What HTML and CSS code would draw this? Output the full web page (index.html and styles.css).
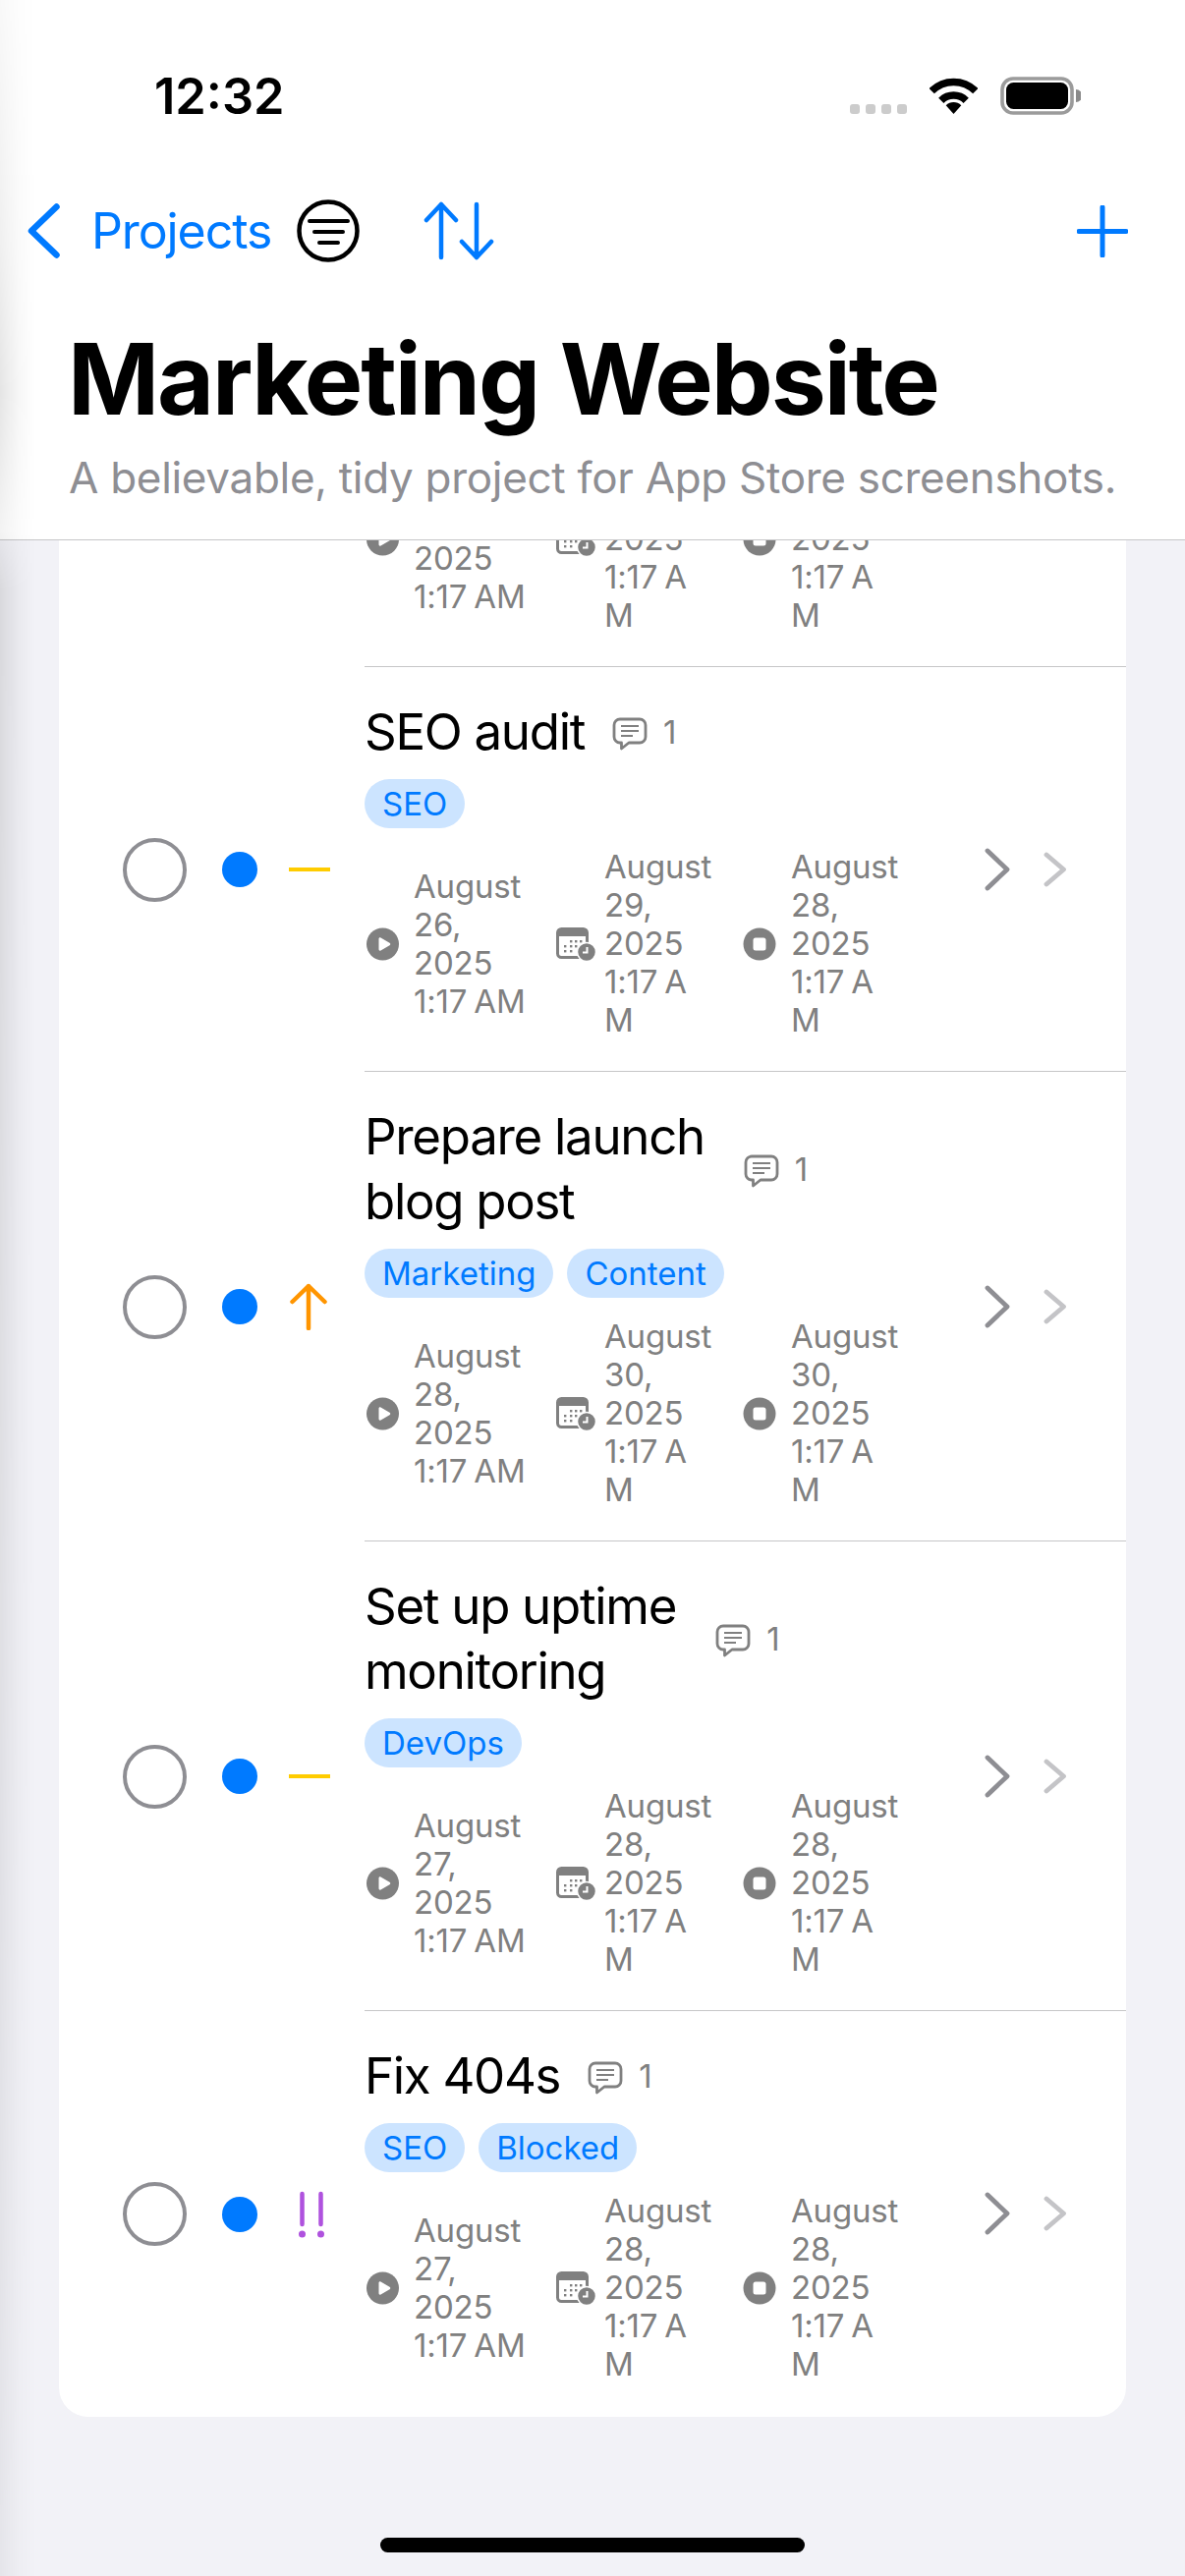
FILE: index.html
```html
<!DOCTYPE html>
<html lang="en">
<head>
<meta charset="utf-8">
<title>Marketing Website</title>
<link rel="stylesheet" href="styles.css">
</head>
<body>
<svg class="sprite" xmlns="http://www.w3.org/2000/svg">
  <symbol id="i-play" viewBox="0 0 36 36"><circle cx="18.500" cy="18" r="16.500" fill="#808080"/><path d="M14.500 12.800c0-1.200 1-1.800 2-1.200l9 5.200c1 .6 1 1.900 0 2.500l-9 5.200c-1 .6-2-.1-2-1.200z" fill="#fff"/></symbol>
  <symbol id="i-stop" viewBox="0 0 36 36"><circle cx="17" cy="18" r="16.500" fill="#808080"/><rect x="10.500" y="11.500" width="13" height="13" rx="2.500" fill="#fff"/></symbol>
  <symbol id="i-cal" viewBox="0 0 40 34">
    <rect x="1.500" y="1.500" width="30" height="29" rx="4" fill="none" stroke="#808080" stroke-width="3"/>
    <path d="M1 9V5a4 4 0 0 1 4-4h23a4 4 0 0 1 4 4v4z" fill="#808080"/>
    <g fill="#808080"><rect x="14" y="13" width="2.400" height="2.400"/><rect x="19" y="13" width="2.400" height="2.400"/><rect x="24" y="13" width="2.400" height="2.400"/><rect x="8" y="18" width="2.400" height="2.400"/><rect x="14" y="18" width="2.400" height="2.400"/><rect x="19" y="18" width="2.400" height="2.400"/><rect x="8" y="23" width="2.400" height="2.400"/><rect x="14" y="23" width="2.400" height="2.400"/></g>
    <circle cx="31" cy="25" r="9.500" fill="#808080" stroke="#fff" stroke-width="1.500"/>
    <path d="M31.500 20v5.500H27" fill="none" stroke="#fff" stroke-width="2"/>
  </symbol>
  <symbol id="i-comment" viewBox="0 0 36 34">
    <path d="M8 2h20a6 6 0 0 1 6 6v12a6 6 0 0 1-6 6H17l-7.500 6v-6H8a6 6 0 0 1-6-6V8a6 6 0 0 1 6-6z" fill="none" stroke="#808080" stroke-width="2.800" stroke-linejoin="round"/>
    <path d="M9 9h18M9 14h18M9 19h12" stroke="#808080" stroke-width="2.200" fill="none"/>
  </symbol>
  <symbol id="i-chev" viewBox="0 0 26 44"><path d="M3 3l20 19L3 41" fill="none" stroke="#8e8e93" stroke-width="4.800" stroke-linecap="round" stroke-linejoin="round"/></symbol>
  <symbol id="i-chev-s" viewBox="0 0 24 36"><path d="M3 3l17.500 15L3 33" fill="none" stroke="#c4c4c7" stroke-width="4.800" stroke-linecap="round" stroke-linejoin="round"/></symbol>
  <symbol id="i-up" viewBox="0 0 40 48"><path d="M20 46V3M3.500 19L20 3l16.500 16" fill="none" stroke="#ff9500" stroke-width="4.500" stroke-linecap="round" stroke-linejoin="round"/></symbol>
  <symbol id="i-dash" viewBox="0 0 42 6"><path d="M0 3h42" stroke="#ffcc00" stroke-width="4"/></symbol>
  <symbol id="i-bang" viewBox="0 0 28 48"><path d="M4.500 3v31M23.500 3v31" stroke="#af52de" stroke-width="4.500" stroke-linecap="round"/><circle cx="4.500" cy="44" r="3.500" fill="#af52de"/><circle cx="23.500" cy="44" r="3.500" fill="#af52de"/></symbol>
</svg>

<div class="edge-shadow"></div>

<header class="header">
  <div class="statusbar">
    <span class="clock">12:32</span>
    <div class="status-icons">
      <div class="signal"><i></i><i></i><i></i><i></i></div>
      <svg class="wifi" width="49" height="37" viewBox="0 0 49 37"><path d="M2.200 13.700A31.500 31.500 0 0 1 46.800 13.700M11.800 23.300A18 18 0 0 1 37.200 23.300" fill="none" stroke="#000" stroke-width="7.500"/><path d="M24.500 37L16.700 28.200A11 11 0 0 1 32.300 28.200Z"/></svg>
      <svg class="battery" width="82" height="39" viewBox="0 0 82 39"><rect x="2" y="2" width="71" height="35" rx="11" fill="none" stroke="#9b9b9b" stroke-width="3.600"/><rect x="6" y="6" width="63" height="27" rx="7.500"/><path d="M77 13a6 6 0 0 1 0 13z" fill="#8a8a8a"/></svg>
    </div>
  </div>
  <nav class="navbar">
    <svg class="nav-back" width="33" height="56" viewBox="0 0 33 56"><path d="M29.500 3.500L4 28l25.500 24.500" fill="none" stroke="#007aff" stroke-width="6.500" stroke-linecap="round" stroke-linejoin="round"/></svg>
    <span class="nav-label">Projects</span>
    <svg class="nav-filter" width="64" height="64" viewBox="0 0 64 64"><circle cx="32" cy="32" r="29.500" fill="none" stroke="#000" stroke-width="4.500"/><path d="M13 22h39M18 33h29M23 44h19" stroke="#000" stroke-width="4" stroke-linecap="round"/></svg>
    <svg class="nav-sort" width="72" height="60" viewBox="0 0 72 60"><path d="M18 57V3M3 19L18 3l15 16M54 3v54M39 41l15 16 15-16" fill="none" stroke="#007aff" stroke-width="4.500" stroke-linecap="round" stroke-linejoin="round"/></svg>
    <svg class="nav-plus" width="52" height="53" viewBox="0 0 52 53"><path d="M26 2v49M2 26.500h48" fill="none" stroke="#007aff" stroke-width="5" stroke-linecap="round"/></svg>
  </nav>
  <h1 class="title">Marketing Website</h1>
  <p class="subtitle">A believable, tidy project for App Store screenshots.</p>
</header>

<main class="content">
  <section class="card">

    <article class="row row-clipped">
      <div class="status"></div>
      <div class="body">
        <div class="main">
          <div class="dates">
            <div class="date date-start"><svg class="date-icon"><use href="#i-play"/></svg><span class="date-text"><span class="date-day">August 25, 2025</span><span class="date-time">1:17 AM</span></span></div>
            <div class="date date-due"><svg class="date-icon"><use href="#i-cal"/></svg><span class="date-text"><span class="date-day">August 28, 2025</span><span class="date-time">1:17 AM</span></span></div>
            <div class="date date-end"><svg class="date-icon"><use href="#i-stop"/></svg><span class="date-text"><span class="date-day">August 27, 2025</span><span class="date-time">1:17 AM</span></span></div>
          </div>
        </div>
      </div>
    </article>

    <article class="row">
      <div class="status">
        <span class="check"></span><span class="dot"></span>
        <svg class="prio prio-dash"><use href="#i-dash"/></svg>
      </div>
      <div class="body">
        <div class="main">
          <div class="head">
            <div class="task">SEO audit</div>
            <div class="comments"><svg class="comment-icon"><use href="#i-comment"/></svg><span>1</span></div>
          </div>
          <div class="tags"><span class="tag">SEO</span></div>
          <div class="dates">
            <div class="date date-start"><svg class="date-icon"><use href="#i-play"/></svg><span class="date-text"><span class="date-day">August 26, 2025</span><span class="date-time">1:17 AM</span></span></div>
            <div class="date date-due"><svg class="date-icon"><use href="#i-cal"/></svg><span class="date-text"><span class="date-day">August 29, 2025</span><span class="date-time">1:17 AM</span></span></div>
            <div class="date date-end"><svg class="date-icon"><use href="#i-stop"/></svg><span class="date-text"><span class="date-day">August 28, 2025</span><span class="date-time">1:17 AM</span></span></div>
          </div>
        </div>
        <div class="chevrons"><svg class="chev chev-dark"><use href="#i-chev"/></svg><svg class="chev chev-light"><use href="#i-chev-s"/></svg></div>
      </div>
    </article>

    <article class="row">
      <div class="status">
        <span class="check"></span><span class="dot"></span>
        <svg class="prio prio-up"><use href="#i-up"/></svg>
      </div>
      <div class="body">
        <div class="main">
          <div class="head head-wrapped">
            <div class="task">Prepare launch<br>blog post</div>
            <div class="comments"><svg class="comment-icon"><use href="#i-comment"/></svg><span>1</span></div>
          </div>
          <div class="tags"><span class="tag">Marketing</span><span class="tag">Content</span></div>
          <div class="dates">
            <div class="date date-start"><svg class="date-icon"><use href="#i-play"/></svg><span class="date-text"><span class="date-day">August 28, 2025</span><span class="date-time">1:17 AM</span></span></div>
            <div class="date date-due"><svg class="date-icon"><use href="#i-cal"/></svg><span class="date-text"><span class="date-day">August 30, 2025</span><span class="date-time">1:17 AM</span></span></div>
            <div class="date date-end"><svg class="date-icon"><use href="#i-stop"/></svg><span class="date-text"><span class="date-day">August 30, 2025</span><span class="date-time">1:17 AM</span></span></div>
          </div>
        </div>
        <div class="chevrons"><svg class="chev chev-dark"><use href="#i-chev"/></svg><svg class="chev chev-light"><use href="#i-chev-s"/></svg></div>
      </div>
    </article>

    <article class="row">
      <div class="status">
        <span class="check"></span><span class="dot"></span>
        <svg class="prio prio-dash"><use href="#i-dash"/></svg>
      </div>
      <div class="body">
        <div class="main">
          <div class="head head-wrapped">
            <div class="task">Set up uptime<br>monitoring</div>
            <div class="comments"><svg class="comment-icon"><use href="#i-comment"/></svg><span>1</span></div>
          </div>
          <div class="tags"><span class="tag">DevOps</span></div>
          <div class="dates">
            <div class="date date-start"><svg class="date-icon"><use href="#i-play"/></svg><span class="date-text"><span class="date-day">August 27, 2025</span><span class="date-time">1:17 AM</span></span></div>
            <div class="date date-due"><svg class="date-icon"><use href="#i-cal"/></svg><span class="date-text"><span class="date-day">August 28, 2025</span><span class="date-time">1:17 AM</span></span></div>
            <div class="date date-end"><svg class="date-icon"><use href="#i-stop"/></svg><span class="date-text"><span class="date-day">August 28, 2025</span><span class="date-time">1:17 AM</span></span></div>
          </div>
        </div>
        <div class="chevrons"><svg class="chev chev-dark"><use href="#i-chev"/></svg><svg class="chev chev-light"><use href="#i-chev-s"/></svg></div>
      </div>
    </article>

    <article class="row row-last">
      <div class="status">
        <span class="check"></span><span class="dot"></span>
        <svg class="prio prio-bang"><use href="#i-bang"/></svg>
      </div>
      <div class="body">
        <div class="main">
          <div class="head">
            <div class="task">Fix 404s</div>
            <div class="comments"><svg class="comment-icon"><use href="#i-comment"/></svg><span>1</span></div>
          </div>
          <div class="tags"><span class="tag">SEO</span><span class="tag">Blocked</span></div>
          <div class="dates">
            <div class="date date-start"><svg class="date-icon"><use href="#i-play"/></svg><span class="date-text"><span class="date-day">August 27, 2025</span><span class="date-time">1:17 AM</span></span></div>
            <div class="date date-due"><svg class="date-icon"><use href="#i-cal"/></svg><span class="date-text"><span class="date-day">August 28, 2025</span><span class="date-time">1:17 AM</span></span></div>
            <div class="date date-end"><svg class="date-icon"><use href="#i-stop"/></svg><span class="date-text"><span class="date-day">August 28, 2025</span><span class="date-time">1:17 AM</span></span></div>
          </div>
        </div>
        <div class="chevrons"><svg class="chev chev-dark"><use href="#i-chev"/></svg><svg class="chev chev-light"><use href="#i-chev-s"/></svg></div>
      </div>
    </article>

  </section>
</main>

<div class="home-indicator"></div>
</body>
</html>
```

FILE: styles.css
```css
* { box-sizing: border-box; }
html, body { margin: 0; padding: 0; }
body {
  position: relative;
  width: 1206px;
  height: 2622px;
  overflow: hidden;
  display: flex;
  flex-direction: column;
  background: #f2f2f7;
  font-family: Inter, "Liberation Sans", sans-serif;
  color: #000;
}
.sprite { display: none; }

.edge-shadow {
  position: absolute;
  z-index: 5;
  left: 0;
  top: 0;
  bottom: 0;
  width: 36px;
  background: linear-gradient(90deg, rgba(0,0,0,.1), rgba(0,0,0,.03) 55%, rgba(0,0,0,0));
  -webkit-mask-image: linear-gradient(180deg, rgba(0,0,0,.25) 0, rgba(0,0,0,.6) 250px, #000 400px, rgba(0,0,0,.45) 540px, #000 600px, rgba(0,0,0,.5) 2622px);
  mask-image: linear-gradient(180deg, rgba(0,0,0,.25) 0, rgba(0,0,0,.6) 250px, #000 400px, rgba(0,0,0,.45) 540px, #000 600px, rgba(0,0,0,.5) 2622px);
}

.header {
  flex: none;
  height: 550px;
  background: #fff;
  border-bottom: 1px solid #c6c6c8;
}
.statusbar {
  height: 190px;
  padding: 78px 106px 0 157px;
  display: flex;
  justify-content: space-between;
  align-items: flex-start;
}
.clock {
  font-size: 50.500px;
  line-height: 40px;
  font-weight: 600;
}
.status-icons { display: flex; align-items: flex-start; }
.signal { display: flex; gap: 6px; margin-top: 28px; margin-right: 23px; }
.signal i { display: block; width: 10px; height: 10px; border-radius: 3px; background: #cccccc; }
.wifi { margin-top: 1px; margin-right: 23px; }

.navbar {
  height: 90px;
  padding: 0 58px 0 28px;
  display: flex;
  align-items: center;
}
.nav-label { margin-left: 32px; font-size: 50px; line-height: 60px; letter-spacing: -1.100px; color: #007aff; }
.nav-filter { margin-left: 26px; }
.nav-sort { margin-left: 65px; }
.nav-plus { margin-left: auto; }

.title {
  margin: 46px 0 0 69px;
  font-size: 100px;
  line-height: 120px;
  font-weight: 700;
  letter-spacing: -2.100px;
}
.subtitle {
  margin: 10px 0 0 70px;
  font-size: 44px;
  line-height: 60px;
  letter-spacing: -0.300px;
  color: #8e8e93;
  white-space: nowrap;
}

.content { flex: 1; min-height: 0; overflow: hidden; padding: 0 60px; }
.card { background: #fff; border-radius: 0 0 30px 30px; }

.row { display: flex; align-items: center; }
.row-clipped { height: 129px; overflow: hidden; align-items: flex-end; }
.status {
  flex: none;
  width: 311px;
  padding-left: 65px;
  display: flex;
  align-items: center;
}
.check { flex: none; width: 65px; height: 65px; border-radius: 50%; border: 4.500px solid #8e8e93; }
.dot { flex: none; width: 36px; height: 36px; margin-left: 36px; border-radius: 50%; background: #007aff; }
.prio { flex: none; margin-left: 32px; }
.prio-dash { width: 42px; height: 6px; }
.prio-up { width: 40px; height: 48px; }
.prio-bang { width: 28px; height: 48px; margin-left: 41px; }

.body {
  flex: 1;
  display: flex;
  align-items: center;
  border-bottom: 1px solid #c6c6c8;
  padding: 33px 0 32px;
}
.row-last .body { border-bottom: 0; padding-bottom: 34px; }

.main { flex: none; }
.head { display: flex; align-items: center; gap: 28px; }
.head-wrapped { gap: 40px; }
.task { font-size: 51px; line-height: 66px; letter-spacing: -1.300px; }
.comments {
  display: flex;
  align-items: center;
  gap: 16px;
  font-size: 33px;
  line-height: 40px;
  color: #808080;
}
.comment-icon { width: 36px; height: 34px; margin-top: 4px; }

.tags { display: flex; gap: 14px; margin-top: 15px; }
.tag {
  height: 50px;
  padding: 0 18px;
  border-radius: 25px;
  background: #cce4ff;
  color: #007aff;
  font-size: 33px;
  line-height: 50px;
}

.dates { display: flex; align-items: center; margin-top: 20px; height: 195px; }
.date { flex: none; display: flex; align-items: center; gap: 14px; }
.date-start { width: 195px; }
.date-due { width: 190px; }
.date-end { gap: 13px; }
.date-text {
  font-size: 33px;
  line-height: 39px;
  letter-spacing: -0.200px;
  word-spacing: -2px;
  color: #808080;
}
.date-day, .date-time { display: block; }
.date-time { word-break: break-all; }
.date-start .date-text { width: 122px; }
.date-due .date-text, .date-end .date-text { width: 100px; }
.date-icon { flex: none; width: 36px; height: 36px; overflow: visible; }
.date-due .date-icon { width: 40px; height: 34px; margin-right: -5px; }

.chevrons { margin-left: auto; padding-right: 60px; display: flex; align-items: center; gap: 34px; }
.chev { display: block; }
.chev-dark { width: 26px; height: 44px; }
.chev-light { width: 24px; height: 36px; }

.home-indicator {
  position: absolute;
  left: 387px;
  bottom: 24px;
  width: 432px;
  height: 15px;
  border-radius: 8px;
  background: #000;
}
```
